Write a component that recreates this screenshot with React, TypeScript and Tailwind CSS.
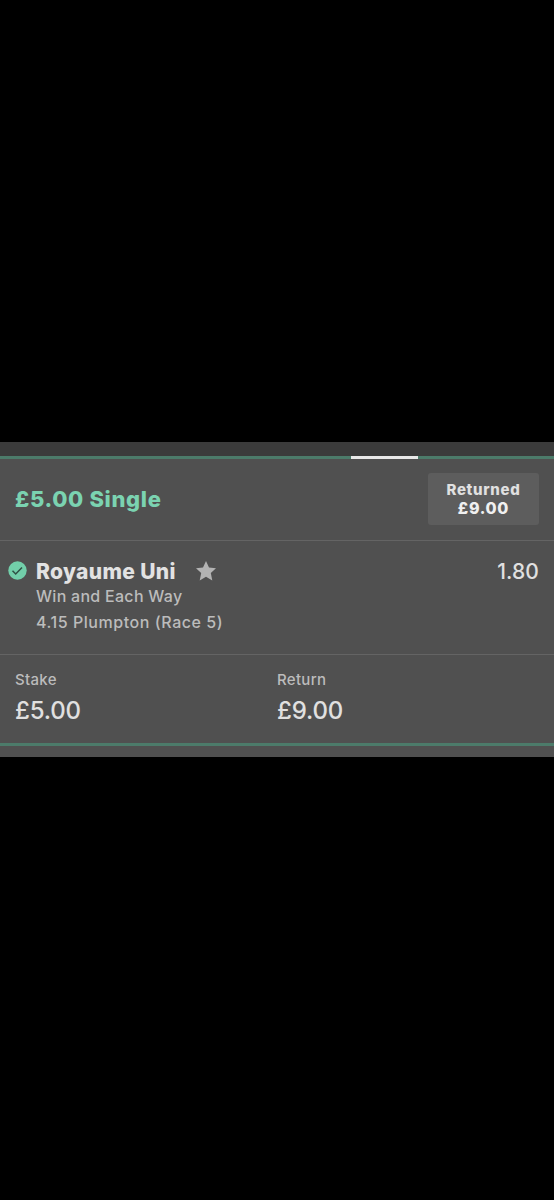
import React from "react";

const details = [
  { label: "Stake", value: "£5.00" },
  { label: "Return", value: "£9.00" },
];

function App() {
  return (
    <div className="flex h-[1200px] w-[554px] flex-col justify-start overflow-hidden bg-black pt-[442px] font-['Inter',sans-serif] text-[#e0e0e0]">
      <div className="h-[315px] bg-[#505050]">
        {/* Tab indicator */}
        <div className="flex h-[17px] items-end bg-[#3b3b3b]">
          <div className="h-[3px] w-[351px] bg-[#4c7b6a]"></div>
          <div className="h-[3px] w-[67px] bg-[#e8e8e8]"></div>
          <div className="h-[3px] grow bg-[#4c7b6a]"></div>
        </div>

        {/* Header */}
        <div className="flex h-[82px] items-center justify-between border-b border-[#646464] pr-[15px] pb-[2px] pl-[15px]">
          <span className="pt-px text-[22px] font-extrabold tracking-[0.65px] text-[#7bd3b1]">
            £5.00 Single
          </span>
          <div className="flex h-[52px] w-[111px] flex-col items-center justify-center rounded-[3px] bg-[#5d5d5d] text-[15px] leading-[19px] font-extrabold tracking-[0.7px]">
            <span>Returned</span>
            <span className="text-base leading-[19px] text-[#f0f0f0]">£9.00</span>
          </div>
        </div>

        {/* Selection */}
        <div className="flex h-[114px] border-b border-[#646464] pt-4 pr-[15px] pl-2">
          <svg className="mt-[4px] h-[19px] w-[19px]" viewBox="0 0 19 19">
            <circle cx="9.5" cy="9.5" r="9.2" fill="#72cfaa" />
            <path d="M4.500 9.800l3.200 3.200 6.300-6.500" fill="none" stroke="#2f5145" strokeWidth="1.500" />
          </svg>
          <div className="ml-[9px] grow text-base font-medium text-[#bcbcbc]">
            <div className="flex h-7 items-center">
              <span className="pt-px text-[21px] font-extrabold tracking-[0.35px] text-[#e2e2e2]">
                Royaume Uni
              </span>
              <svg className="ml-5 h-5 w-5" viewBox="0 0 20 20">
                <path d="M10 0l3 6.500 7 .8-5.200 4.800L16.300 19.500 10 15.800 3.700 19.500 5.200 12.100 0 7.300l7-.8z" fill="#b3b3b3" />
              </svg>
            </div>
            <div className="h-[26px] leading-[22px] tracking-[0.28px]">
              Win and Each Way
            </div>
            <div className="leading-[23px] tracking-[0.55px]">
              4.15 Plumpton (Race 5)
            </div>
          </div>
          <span className="text-[21px] leading-[29px] font-medium tracking-[0.1px]">
            1.80
          </span>
        </div>

        {/* Stake and return */}
        <div className="flex h-[88px] px-[15px] pt-[15px]">
          {details.map((item) => (
            <div key={item.label} className="w-[262px]">
              <div className="text-[15px] leading-5 font-medium tracking-[0.3px] text-[#bcbcbc]">
                {item.label}
              </div>
              <div className="mt-[7px] text-2xl leading-7 font-medium tracking-[-0.2px]">
                {item.value}
              </div>
            </div>
          ))}
        </div>
        <div className="h-[3px] bg-[#4c7b6a]"></div>
      </div>
    </div>
  );
}

export default App;
